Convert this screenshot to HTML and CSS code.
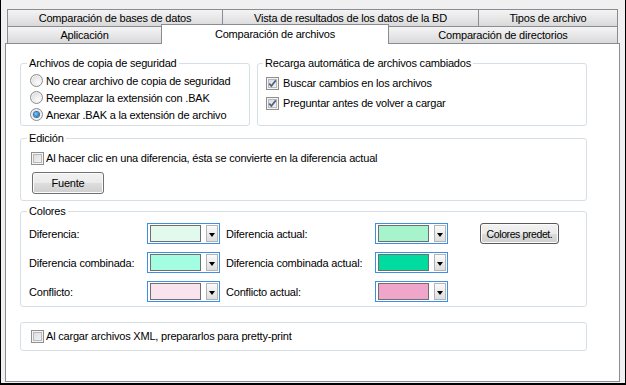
FILE: index.html
```html
<!DOCTYPE html>
<html lang="es">
<head>
<meta charset="utf-8">
<title>Comparación de archivos</title>
<link rel="stylesheet" href="styles.css">
</head>
<body>
<div class="window">
  <div class="tabs">
    <div class="tabrow row1">
      <div class="tab w1">Comparación de bases de datos</div>
      <div class="tab w2">Vista de resultados de los datos de la BD</div>
      <div class="tab w3">Tipos de archivo</div>
    </div>
    <div class="tabrow row2">
      <div class="tab w4">Aplicación</div>
      <div class="tab w5 active">Comparación de archivos</div>
      <div class="tab w6">Comparación de directorios</div>
    </div>
  </div>
  <div class="panel">
    <div class="toprow">
      <fieldset class="group g-backup">
        <legend>Archivos de copia de seguridad</legend>
        <label class="opt"><span class="radio"></span>No crear archivo de copia de seguridad</label>
        <label class="opt"><span class="radio"></span>Reemplazar la extensión con .BAK</label>
        <label class="opt"><span class="radio on"><span class="dot"></span></span>Anexar .BAK a la extensión de archivo</label>
      </fieldset>
      <fieldset class="group g-reload">
        <legend>Recarga automática de archivos cambiados</legend>
        <label class="chk"><span class="cb"><svg width="9" height="9" viewBox="0 0 9 9"><path d="M1.2 4.6 L3.4 7 L7.8 1.4" fill="none" stroke="#4d6185" stroke-width="1.7"/></svg></span>Buscar cambios en los archivos</label>
        <label class="chk"><span class="cb"><svg width="9" height="9" viewBox="0 0 9 9"><path d="M1.2 4.6 L3.4 7 L7.8 1.4" fill="none" stroke="#4d6185" stroke-width="1.7"/></svg></span>Preguntar antes de volver a cargar</label>
      </fieldset>
    </div>
    <fieldset class="group g-edit">
      <legend>Edición</legend>
      <label class="chk2"><span class="cb"></span>Al hacer clic en una diferencia, ésta se convierte en la diferencia actual</label>
      <button class="btn fuente" type="button">Fuente</button>
    </fieldset>
    <fieldset class="group g-colors">
      <legend>Colores</legend>
      <div class="colorgrid">
        <span class="clabel">Diferencia:</span>
        <span class="combo"><span class="swatch c1"></span><span class="drop"><span class="arrow"></span></span></span>
        <span class="clabel second">Diferencia actual:</span>
        <span class="combo"><span class="swatch c4"></span><span class="drop"><span class="arrow"></span></span></span>
        <button class="btn predet" type="button">Colores predet.</button>

        <span class="clabel">Diferencia combinada:</span>
        <span class="combo"><span class="swatch c2"></span><span class="drop"><span class="arrow"></span></span></span>
        <span class="clabel second">Diferencia combinada actual:</span>
        <span class="combo"><span class="swatch c5"></span><span class="drop"><span class="arrow"></span></span></span>
        <span></span>

        <span class="clabel">Conflicto:</span>
        <span class="combo"><span class="swatch c3"></span><span class="drop"><span class="arrow"></span></span></span>
        <span class="clabel second">Conflicto actual:</span>
        <span class="combo"><span class="swatch c6"></span><span class="drop"><span class="arrow"></span></span></span>
        <span></span>
      </div>
    </fieldset>
    <fieldset class="group g-xml">
      <label class="chk2"><span class="cb"></span>Al cargar archivos XML, prepararlos para pretty-print</label>
    </fieldset>
  </div>
</div>
</body>
</html>
```

FILE: styles.css
```css
* { box-sizing: border-box; }
html, body { margin: 0; padding: 0; }
body {
  font-family: "Liberation Sans", Arial, sans-serif;
  font-size: 11px;
  letter-spacing: -0.2px;
  color: #000;
  background: #f0f0f0;
}
.window {
  width: 626px;
  height: 385px;
  background: #f0f0f0;
  border-left: 1px solid #000;
  border-right: 1px solid #000;
  border-bottom: 2px solid #000;
  padding: 9px 5px 0 4px;
  overflow: hidden;
}
.tabs { margin-left: 2px; }
.tabrow { display: flex; }
.tab {
  border: 1px solid #898c95;
  background: linear-gradient(#f4f4f4, #e6e6e6 55%, #d9d9d9);
  display: flex;
  align-items: center;
  justify-content: center;
  white-space: nowrap;
  margin-left: -1px;
}
.tab:first-child { margin-left: 0; }
.row1 .tab { height: 18px; }
.row2 { height: 16px; }
.row2 .tab { height: 16px; border-top: 0; border-bottom: 0; }
.row2 .tab.active {
  height: 20px;
  margin-top: -3px;
  border-top: 1px solid #898c95;
  background: #fff;
  padding-bottom: 2px;
  position: relative;
  z-index: 1;
}
.w1 { width: 216px; }
.w2 { width: 257px; }
.w3 { width: 140px; }
.w4 { width: 155px; }
.w5 { width: 228px; }
.w6 { width: 230px; }

.panel {
  height: 339px;
  border: 1px solid #898c95;
  background: #fff;
  padding: 12px 32px 0 14px;
}
.group {
  margin: 0;
  min-width: 0;
  border: 1px solid #d5dfe5;
  border-radius: 3px;
}
.group legend {
  padding: 0 2px;
  margin-left: -3px;
  line-height: 14px;
  height: 14px;
}
.toprow { display: flex; gap: 7px; align-items: stretch; }
.g-backup { width: 230px; padding: 2px 8px 2px 9px; }
.g-reload { flex: 1; padding: 3px 8px 0 8px; }

.opt { display: flex; align-items: center; gap: 3px; height: 17px; }
.chk { display: flex; align-items: center; gap: 4px; height: 20px; }
.chk2 { display: flex; align-items: center; gap: 2px; height: 18px; }
.chk2 .cb { margin-left: 1px; }

.radio {
  width: 13px;
  height: 13px;
  border-radius: 50%;
  border: 1px solid #8b8b8b;
  background: radial-gradient(circle at 65% 70%, #fdfdfd 0%, #e6e6e6 55%, #cfcfcf 100%);
  box-shadow: inset 0 0 0 1px #f4f4f4;
  flex: none;
}
.radio.on { display: flex; align-items: center; justify-content: center; }
.radio .dot {
  width: 5px;
  height: 5px;
  border-radius: 50%;
  background: radial-gradient(circle at 40% 40%, #8fd3ff 0%, #2c86c9 55%, #1b4f85 100%);
  box-shadow: 0 0 0 1px #3d6ea1;
}
.cb {
  width: 13px;
  height: 13px;
  flex: none;
  border: 1px solid #8e8f8f;
  background: linear-gradient(135deg, #d8d8d8, #f7f7f7);
  box-shadow: inset 0 0 0 1px #f4f4f4, inset 0 0 0 2px #b9b9b9;
  display: flex;
  align-items: center;
  justify-content: center;
}
.cb svg { display: block; }

.g-edit { margin-top: 5px; padding: 4px 8px 6px 9px; }
.btn {
  font-family: "Liberation Sans", Arial, sans-serif;
  font-size: 11px;
  letter-spacing: -0.2px;
  color: #000;
  border: 1px solid #707070;
  border-radius: 3px;
  background: linear-gradient(#f2f2f2 0%, #ebebeb 50%, #dddddd 51%, #cfcfcf 100%);
  box-shadow: inset 0 0 0 1px #fbfbfb;
  padding: 0;
  display: flex;
  align-items: center;
  justify-content: center;
}
.fuente { margin: 5px 0 0 2px; width: 72px; height: 22px; }

.g-colors { margin-top: 3px; padding: 5px 8px 4px 8px; }
.g-colors legend { margin-left: -2px; }
.colorgrid {
  display: grid;
  grid-template-columns: 118px 73px 155px 73px auto;
  grid-auto-rows: 21px;
  row-gap: 8px;
  align-items: center;
}
.clabel { white-space: nowrap; }
.clabel.second { padding-left: 6px; }
.combo {
  width: 73px;
  height: 21px;
  border: 1px solid #3d8ee6;
  background: #fff;
  display: flex;
  padding: 1px;
}
.swatch {
  width: 53px;
  height: 17px;
  margin: 0 0 0 1px;
  border: 1px solid #6f6f6f;
}
.drop {
  width: 12px;
  height: 17px;
  margin-left: 5px;
  border: 1px solid #b4b4b4;
  background: linear-gradient(#fbfbfb, #dedede);
  display: flex;
  align-items: center;
  justify-content: center;
  padding-top: 2px;
}
.arrow {
  width: 0;
  height: 0;
  border-left: 3.5px solid transparent;
  border-right: 3.5px solid transparent;
  border-top: 4px solid #000;
}
.c1 { background: #e2f9ee; }
.c2 { background: #a3fde1; }
.c3 { background: #f9e3ef; }
.c4 { background: #a7f3cb; }
.c5 { background: #00dca0; }
.c6 { background: #f0a6cb; }
.predet {
  margin-left: 32px;
  width: 79px;
  height: 21px;
  font-size: 10.5px;
  letter-spacing: -0.4px;
  border-color: #5a5a5a;
}

.g-xml { margin-top: 15px; padding: 4px 8px 5px 9px; }
```
